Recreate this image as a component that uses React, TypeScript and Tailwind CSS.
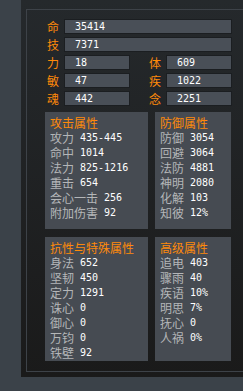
import React from 'react'

const cjk = "font-['Noto_Sans_CJK_SC','Noto_Sans',sans-serif]"
const mono = "font-['DejaVu_Sans_Mono','Liberation_Mono',monospace]"

const panels = [
  {
    title: '攻击属性',
    rows: [
      ['攻力', '435-445'],
      ['命中', '1014'],
      ['法力', '825-1216'],
      ['重击', '654'],
      ['会心一击', '256'],
      ['附加伤害', '92'],
    ],
  },
  {
    title: '防御属性',
    rows: [
      ['防御', '3054'],
      ['回避', '3064'],
      ['法防', '4881'],
      ['神明', '2080'],
      ['化解', '103'],
      ['知彼', '12%'],
    ],
  },
  {
    title: '抗性与特殊属性',
    rows: [
      ['身法', '652'],
      ['坚韧', '450'],
      ['定力', '1291'],
      ['诛心', '0'],
      ['御心', '0'],
      ['万钧', '0'],
      ['铁壁', '92'],
    ],
  },
  {
    title: '高级属性',
    rows: [
      ['追电', '403'],
      ['骤雨', '40'],
      ['疾语', '10%'],
      ['明思', '7%'],
      ['抚心', '0'],
      ['人祸', '0%'],
    ],
  },
]

const Field: React.FC<{ label: string; value: string; wide?: boolean }> = ({ label, value, wide }) => (
  <div className="flex items-center h-[13px]">
    <span className={`w-[20px] pl-[2px] text-[12px] leading-[13px] text-[#ff8a0a] ${cjk}`}>{label}</span>
    <div
      className={`${wide ? 'w-[166px]' : 'w-[64px]'} h-[13px] bg-[#494f57] ring-1 ring-[#1b1e21] pl-[10px] text-[10px] leading-[13px] text-white ${mono}`}
    >
      {value}
    </div>
  </div>
)

const Panel: React.FC<{ title: string; rows: string[][]; className: string }> = ({ title, rows, className }) => (
  <div className={`bg-[#464b52] pt-[3px] pl-[5px] ${className}`}>
    <div className={`text-[12px] leading-[15px] text-[#ff8a0a] ${cjk}`}>{title}</div>
    {rows.map(([k, v], i) => (
      <div key={i} className="flex items-center h-[15px]">
        <span className={`text-[12px] leading-[15px] text-[#b4b6b8] ${cjk}`}>{k}</span>
        <span className={`ml-[6px] text-[10px] text-white ${mono}`}>{v}</span>
      </div>
    ))}
  </div>
)

export default function App() {
  return (
    <div className="w-[243px] h-[391px] bg-[#3b4249] overflow-hidden">
      <div className="ml-[21px] h-[377px] bg-gradient-to-b from-[#25292c] to-[#1a1a1a] pt-[9px] pl-[5px]">
        <div className="h-[363px] border-t border-l border-b border-[#3d4248] pl-[18px] pt-[10px]">
          <div className="w-[186px] flex flex-col gap-[5px]">
            <Field label="命" value="35414" wide />
            <Field label="技" value="7371" wide />
            <div className="flex justify-between">
              <Field label="力" value="18" />
              <Field label="体" value="609" />
            </div>
            <div className="flex justify-between">
              <Field label="敏" value="47" />
              <Field label="疾" value="1022" />
            </div>
            <div className="flex justify-between">
              <Field label="魂" value="442" />
              <Field label="念" value="2251" />
            </div>
          </div>
          <div className="w-[186px] mt-[7px] grid grid-cols-[103px_76px] gap-x-[7px] gap-y-[8px]">
            <Panel {...panels[0]} className="h-[117px]" />
            <Panel {...panels[1]} className="h-[117px]" />
            <Panel {...panels[2]} className="h-[124px]" />
            <Panel {...panels[3]} className="h-[124px]" />
          </div>
        </div>
      </div>
    </div>
  )
}
